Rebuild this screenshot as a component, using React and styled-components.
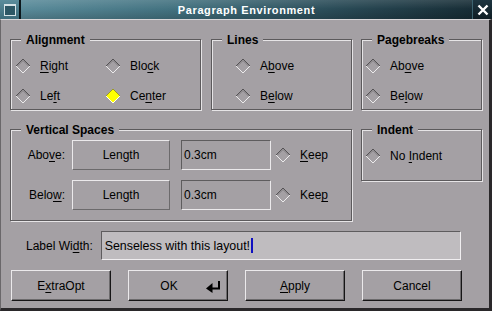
import React from 'react';
import styled, { createGlobalStyle } from 'styled-components';

const BG = '#a4a0a4';

const Global = createGlobalStyle`
  html, body { margin: 0; padding: 0; background: ${BG}; }
  body { font-family: "Liberation Sans", Arial, sans-serif; }
`;

const Window = styled.div`
  width: 492px;
  height: 311px;
  display: flex;
  flex-direction: column;
  background: ${BG};
  font-family: "Liberation Sans", Arial, sans-serif;
  font-size: 12px;
  color: #000;
  overflow: hidden;
`;

const TitleBar = styled.div`
  height: 20px;
  display: flex;
  flex: none;
  background: #0c181d;
`;

const IconBox = styled.div`
  width: 19px;
  display: flex;
  align-items: center;
  justify-content: center;
  background: linear-gradient(180deg, #5b8d9c 0%, #3b6a79 100%);
  border-right: 1px solid #0a1418;
`;

const WinIcon = styled.div`
  width: 10px;
  height: 9px;
  border: 1px solid #d4e2e6;
  border-top-width: 2px;
  background: #2c5765;
`;

const TitleCenter = styled.div`
  flex: 1;
  display: flex;
  align-items: center;
  justify-content: center;
  margin-left: 1px;
  background:
    linear-gradient(180deg, rgba(255,255,255,0.12) 0%, rgba(255,255,255,0) 45%, rgba(0,0,0,0.18) 100%),
    linear-gradient(90deg, #5a8b9a 0%, #42717f 35%, #2a4b57 70%, #172d36 100%);
  color: #fff;
  font-weight: bold;
  font-size: 11px;
  letter-spacing: 0.6px;
  border-right: 1px solid #3c6370;
`;

const CloseBox = styled.div`
  width: 19px;
  display: flex;
  align-items: center;
  justify-content: center;
  background: linear-gradient(180deg, #1d3540 0%, #0e1c22 100%);
`;

const Frame = styled.div`
  flex: 1;
  display: flex;
  flex-direction: column;
  padding: 19px 0 0 9px;
  border-left: 1px solid #6a676a;
  border-right: 3px solid #2a282a;
  border-bottom: 3px solid #2a282a;
  border-top: 1px solid #d8d6d8;
  margin-top: -1px;
`;

const Groups = styled.div`
  display: grid;
  grid-template-columns: 191px 10px 141px 9px 121px;
  grid-template-rows: 71px 92px;
  row-gap: 19px;
  align-items: start;
`;

const Group = styled.div`
  position: relative;
  box-sizing: border-box;
  height: ${p => p.$h}px;
  grid-column: ${p => p.$col};
  border: 1px solid #5c5a5c;
  box-shadow: inset 1px 1px 0 #e6e4e6, 1px 1px 0 #e6e4e6;
`;

const Legend = styled.span`
  position: absolute;
  top: -7px;
  left: 10px;
  padding: 0 5px;
  background: ${BG};
  font-weight: bold;
  font-size: 12px;
  line-height: 14px;
`;

const RadioGrid = styled.div`
  display: grid;
  grid-template-columns: ${p => p.$cols || 'auto'};
  grid-auto-rows: 30px;
  padding: 11px 0 0 ${p => p.$pl}px;
`;

const RadioItem = styled.div`
  display: flex;
  align-items: center;
  gap: 9px;
  white-space: nowrap;
`;

const Mn = styled.span`
  text-decoration: underline;
  text-underline-offset: 2px;
`;

const Diamond = ({ on }) => (
  <svg width="16" height="16" viewBox="0 0 16 16">
    <polygon points="8,1 15,8 8,15 1,8" fill={on ? '#ffff00' : BG} />
    <polyline points="1,8 8,1 15,8" fill="none" stroke={on ? '#9a9a20' : '#555355'} strokeWidth="1" />
    <polyline points="1,8 8,15 15,8" fill="none" stroke={on ? '#fffff0' : '#ecebec'} strokeWidth="1" />
    {on ? null : <polyline points="2.5,8 8,2.5 13.5,8" fill="none" stroke="#7e7b7e" strokeWidth="1" />}
  </svg>
);

const Radio = ({ on, children }) => (
  <RadioItem>
    <Diamond on={on} />
    <span>{children}</span>
  </RadioItem>
);

const SpaceGrid = styled.div`
  display: grid;
  grid-template-columns: 61px 98px 101px auto;
  grid-auto-rows: 30px;
  row-gap: 10px;
  padding-top: 10px;
  align-items: center;
`;

const RowLabel = styled.span`
  text-align: right;
  margin-right: 7px;
`;

const RaisedButton = styled.div`
  box-sizing: border-box;
  height: 30px;
  display: flex;
  align-items: center;
  justify-content: center;
  border: 1px solid;
  border-color: #ebe9eb #6c6a6c #6c6a6c #ebe9eb;
`;

const SunkenField = styled.div`
  box-sizing: border-box;
  height: 30px;
  margin-left: 11px;
  display: flex;
  align-items: center;
  padding-left: 2px;
  border: 1px solid;
  border-color: #5e5c5e #ebe9eb #ebe9eb #5e5c5e;
`;

const KeepWrap = styled.div`
  margin-left: 4px;
`;

const LabelRow = styled.div`
  display: flex;
  align-items: center;
  gap: 8px;
  margin-top: 10px;
  padding-left: 16px;
`;

const TextInput = styled.div`
  box-sizing: border-box;
  width: 360px;
  height: 29px;
  display: flex;
  align-items: center;
  padding-left: 3px;
  background: #bfbcbf;
  font-size: 12.4px;
  border: 1px solid;
  border-color: #5e5c5e #f0eef0 #f0eef0 #5e5c5e;
  white-space: nowrap;
`;

const Caret = styled.span`
  display: inline-block;
  width: 2px;
  height: 15px;
  margin-left: 1px;
  background: #1010c0;
`;

const ButtonRow = styled.div`
  display: flex;
  gap: 17px;
  margin-top: 10px;
  padding-left: 1px;
`;

const DlgButton = styled.div`
  box-sizing: border-box;
  width: 100px;
  height: 31px;
  display: flex;
  align-items: center;
  padding-left: ${p => (p.$icon ? 3 : 0)}px;
  border: 1px solid;
  border-color: #ebe9eb #161516 #161516 #ebe9eb;
  box-shadow: inset -1px -1px 0 #6c6a6c;
`;

const BtnText = styled.span`
  flex: 1;
  text-align: center;
`;

const ReturnIcon = styled.svg`
  margin-right: 6px;
  margin-top: 2px;
`;

export default function App() {
  return (
    <>
      <Global />
      <Window>
        <TitleBar>
          <IconBox><WinIcon /></IconBox>
          <TitleCenter>Paragraph Environment</TitleCenter>
          <CloseBox>
            <svg width="12" height="12" viewBox="0 0 12 12">
              <path d="M1.5 1.5 L10.5 10.5 M10.5 1.5 L1.5 10.5" stroke="#fff" strokeWidth="2.4" />
            </svg>
          </CloseBox>
        </TitleBar>
        <Frame>
          <Groups>
            <Group $h={71} $col="1">
              <Legend>Alignment</Legend>
              <RadioGrid $cols="90px auto" $pl={4}>
                <Radio><Mn>R</Mn>ight</Radio>
                <Radio>Blo<Mn>c</Mn>k</Radio>
                <Radio>Le<Mn>f</Mn>t</Radio>
                <Radio on>Ce<Mn>n</Mn>ter</Radio>
              </RadioGrid>
            </Group>
            <Group $h={71} $col="3">
              <Legend>Lines</Legend>
              <RadioGrid $pl={23}>
                <Radio>A<Mn>b</Mn>ove</Radio>
                <Radio>B<Mn>e</Mn>low</Radio>
              </RadioGrid>
            </Group>
            <Group $h={71} $col="5">
              <Legend>Pagebreaks</Legend>
              <RadioGrid $pl={3}>
                <Radio>Ab<Mn>o</Mn>ve</Radio>
                <Radio>Be<Mn>l</Mn>ow</Radio>
              </RadioGrid>
            </Group>
            <Group $h={92} $col="1 / span 3">
              <Legend>Vertical Spaces</Legend>
              <SpaceGrid>
                <RowLabel>Abo<Mn>v</Mn>e:</RowLabel>
                <RaisedButton>Length</RaisedButton>
                <SunkenField>0.3cm</SunkenField>
                <KeepWrap><Radio><Mn>K</Mn>eep</Radio></KeepWrap>
                <RowLabel>Belo<Mn>w</Mn>:</RowLabel>
                <RaisedButton>Length</RaisedButton>
                <SunkenField>0.3cm</SunkenField>
                <KeepWrap><Radio>Kee<Mn>p</Mn></Radio></KeepWrap>
              </SpaceGrid>
            </Group>
            <Group $h={52} $col="5">
              <Legend>Indent</Legend>
              <RadioGrid $pl={3}>
                <Radio>No <Mn>I</Mn>ndent</Radio>
              </RadioGrid>
            </Group>
          </Groups>
          <LabelRow>
            <span>Label Wi<Mn>d</Mn>th:</span>
            <TextInput>Senseless with this layout!<Caret /></TextInput>
          </LabelRow>
          <ButtonRow>
            <DlgButton><BtnText>E<Mn>x</Mn>traOpt</BtnText></DlgButton>
            <DlgButton $icon>
              <BtnText>OK</BtnText>
              <ReturnIcon width="15" height="12" viewBox="0 0 15 12">
                <path d="M13 0 V7.5 H5" fill="none" stroke="#000" strokeWidth="2" />
                <polygon points="0,7.5 6.5,2 6.5,12" fill="#000" />
              </ReturnIcon>
            </DlgButton>
            <DlgButton><BtnText><Mn>A</Mn>pply</BtnText></DlgButton>
            <DlgButton><BtnText>Cancel</BtnText></DlgButton>
          </ButtonRow>
        </Frame>
      </Window>
    </>
  );
}
